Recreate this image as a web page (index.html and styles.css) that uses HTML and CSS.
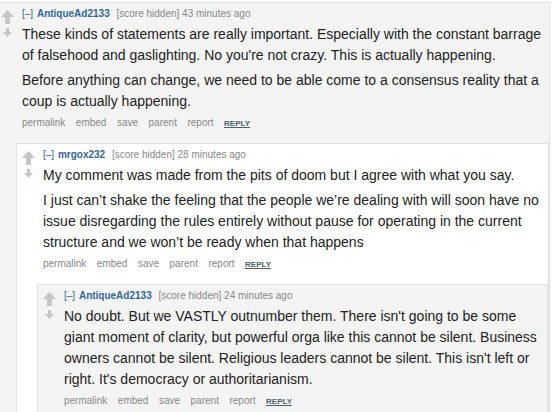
FILE: index.html
```html
<!DOCTYPE html>
<html lang="en">
<head>
  <meta charset="UTF-8" />
  <meta name="viewport" content="width=device-width, initial-scale=1" />
  <title>Comments</title>
  <link rel="stylesheet" href="styles.css">
</head>
<body>
  <div class="thread">

    <!-- Commentaire 1 -->
    <div class="comment odd top">
      <div class="row">
        <div class="midcol">
          <svg class="up" width="13" height="14" viewBox="0 0 13 14"><path d="M6.5 0 L13 7 H9 V14 H4 V7 H0 Z"/></svg>
          <svg class="down" width="9" height="9" viewBox="0 0 9 9"><path d="M3 0 H6 V4 H9 L4.5 9 L0 4 H3 Z"/></svg>
        </div>
        <div class="entry">
          <p class="tagline"><span class="expand">[–]</span> <span class="author">AntiqueAd2133</span> <span class="score">[score hidden] 43 minutes ago</span></p>
          <div class="md">
            <p>These kinds of statements are really important. Especially with the constant barrage of falsehood and gaslighting. No you're not crazy. This is actually happening.</p>
            <p>Before anything can change, we need to be able come to a consensus reality that a coup is actually happening.</p>
          </div>
          <ul class="buttons">
            <li>permalink</li><li>embed</li><li>save</li><li>parent</li><li>report</li><li class="reply">reply</li>
          </ul>
        </div>
      </div>

      <div class="child">
        <!-- Commentaire 2 -->
        <div class="comment even">
          <div class="row">
            <div class="midcol">
              <svg class="up" width="13" height="14" viewBox="0 0 13 14"><path d="M6.5 0 L13 7 H9 V14 H4 V7 H0 Z"/></svg>
              <svg class="down" width="9" height="9" viewBox="0 0 9 9"><path d="M3 0 H6 V4 H9 L4.5 9 L0 4 H3 Z"/></svg>
            </div>
            <div class="entry">
              <p class="tagline"><span class="expand">[–]</span> <span class="author">mrgox232</span> <span class="score">[score hidden] 28 minutes ago</span></p>
              <div class="md">
                <p>My comment was made from the pits of doom but I agree with what you say.</p>
                <p>I just can’t shake the feeling that the people we’re dealing with will soon have no issue disregarding the rules entirely without pause for operating in the current structure and we won’t be ready when that happens</p>
              </div>
              <ul class="buttons">
                <li>permalink</li><li>embed</li><li>save</li><li>parent</li><li>report</li><li class="reply">reply</li>
              </ul>
            </div>
          </div>

          <div class="child">
            <!-- Commentaire 3 -->
            <div class="comment odd">
              <div class="row">
                <div class="midcol">
                  <svg class="up" width="13" height="14" viewBox="0 0 13 14"><path d="M6.5 0 L13 7 H9 V14 H4 V7 H0 Z"/></svg>
                  <svg class="down" width="9" height="9" viewBox="0 0 9 9"><path d="M3 0 H6 V4 H9 L4.5 9 L0 4 H3 Z"/></svg>
                </div>
                <div class="entry">
                  <p class="tagline"><span class="expand">[–]</span> <span class="author">AntiqueAd2133</span> <span class="score">[score hidden] 24 minutes ago</span></p>
                  <div class="md">
                    <p>No doubt. But we VASTLY outnumber them. There isn't going to be some giant moment of clarity, but powerful orga like this cannot be silent. Business owners cannot be silent. Religious leaders cannot be silent. This isn't left or right. It's democracy or authoritarianism.</p>
                  </div>
                  <ul class="buttons">
                    <li>permalink</li><li>embed</li><li>save</li><li>parent</li><li>report</li><li class="reply">reply</li>
                  </ul>
                </div>
              </div>
            </div>
          </div>

        </div>
      </div>
    </div>

  </div>
</body>
</html>
```

FILE: styles.css
```css
body {
  margin: 0;
  background-color: #ffffff;
  font-family: "Liberation Sans", Arial, sans-serif;
  color: #222222;
}
.thread {
  width: 550px;
  padding-top: 2px;
  overflow: hidden;
  height: 410px;
}
.comment {
  border: 1px solid #e2e2e2;
  padding: 5px 0 0 5px;
}
.comment.top {
  margin-left: -5px;
}
.comment.odd {
  background-color: #f4f4f4;
}
.comment.even {
  background-color: #ffffff;
}
.row {
  display: flex;
}
.midcol {
  width: 21px;
  flex-shrink: 0;
  display: flex;
  flex-direction: column;
  align-items: flex-start;
  padding-top: 2px;
}
.midcol svg {
  fill: #c6c6c6;
  display: block;
}
.midcol .down {
  margin: 4px 0 0 2px;
}
.entry {
  flex: 1;
  min-width: 0;
  padding-right: 4px;
  padding-bottom: 12px;
}
.tagline {
  margin: 0;
  font-size: 10px;
  line-height: 12px;
  color: #888888;
}
.tagline .expand {
  color: #369;
  margin-right: 1px;
}
.tagline .author {
  color: #369;
  font-weight: bold;
  margin-right: 4px;
}
.md {
  margin-top: 4px;
  font-size: 14px;
  line-height: 21px;
}
.md p {
  margin: 0 0 4px;
}
.md p:last-child {
  margin-bottom: 0;
}
.buttons {
  list-style: none;
  margin: 4px 0 0;
  padding: 0;
  display: flex;
  align-items: baseline;
  gap: 10.5px;
  font-size: 10px;
  line-height: 14px;
  color: #888888;
}
.buttons .reply {
  text-transform: uppercase;
  font-weight: bold;
  font-size: 8px;
  color: #4f5f6f;
  text-decoration: underline;
}
.child {
  margin-left: 15px;
}
```
